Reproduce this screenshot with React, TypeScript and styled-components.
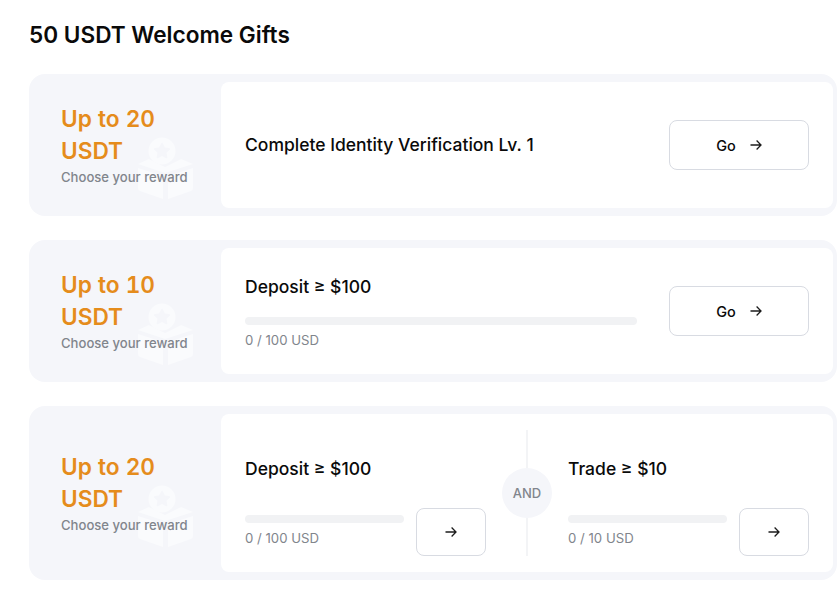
import {FC} from 'react'
import styled, {createGlobalStyle} from 'styled-components'

const GlobalStyle = createGlobalStyle`
    html, body {
        margin: 0;
        padding: 0;
        background: #fff;
        overflow: hidden;
    }
    body {
        font-family: "Inter", "Liberation Sans", sans-serif;
    }
`

const Page = styled.div`
    width: 837px;
    height: 591px;
    padding: 20px 0 0 29px;
    box-sizing: border-box;
    overflow: hidden;
`

const Title = styled.h2`
    margin: 0 0 25px;
    font-size: 22.6px;
    line-height: 29px;
    font-weight: 600;
    color: #0a0a0a;
`

const TaskList = styled.div`
    display: flex;
    flex-direction: column;
    gap: 24px;
`

const TaskCard = styled.div`
    display: flex;
    width: 808px;
    box-sizing: border-box;
    padding: 8px 4px 8px 0;
    background: #f5f6fa;
    border-radius: 16px;
`

const Reward = styled.div`
    position: relative;
    flex: 0 0 192px;
    display: flex;
    flex-direction: column;
    justify-content: center;
    padding-left: 32px;
    box-sizing: border-box;
`

const RewardAmount = styled.div`
    position: relative;
    width: 110px;
    font-size: 22.7px;
    line-height: 32px;
    font-weight: 600;
    font-variant-numeric: tabular-nums;
    color: #e58c1c;
`

const RewardHint = styled.div`
    position: relative;
    font-size: 13.1px;
    line-height: 20px;
    font-weight: 500;
    color: #81858c;
    white-space: nowrap;
`

const GiftMark = styled.svg`
    position: absolute;
    left: 108px;
    top: 50%;
    margin-top: -11px;
    width: 58px;
    height: 66px;
`

const TaskBody = styled.div`
    flex: 1;
    display: flex;
    align-items: center;
    justify-content: space-between;
    height: 126px;
    padding: 0 24px;
    background: #fff;
    border-radius: 8px;
`

const TaskSplit = styled(TaskBody)`
    align-items: stretch;
    padding: 16px 24px;
    height: 158px;
    box-sizing: border-box;
`

const TaskInfo = styled.div`
    display: flex;
    flex-direction: column;
    width: 392px;
    padding-top: 2px;
`

const TaskName = styled.div`
    font-size: 17.5px;
    line-height: 24px;
    font-weight: 500;
    color: #0a0a0a;
    white-space: nowrap;
`

const ProgressTrack = styled.div`
    height: 8px;
    margin-top: 18px;
    background: #f1f2f4;
    border-radius: 4px;
    overflow: hidden;
`

const ProgressLabel = styled.div`
    margin-top: 6px;
    font-size: 13.2px;
    line-height: 18px;
    color: #81858c;
`

const ActionButton = styled.button<{$wide?: boolean}>`
    flex: none;
    display: flex;
    align-items: center;
    justify-content: center;
    gap: 14px;
    width: ${(p) => (p.$wide ? '140px' : '70px')};
    height: ${(p) => (p.$wide ? '50px' : '48px')};
    padding: 0;
    background: #fff;
    border: 1px solid #d8dbe2;
    border-radius: 8px;
    font-family: inherit;
    font-size: 14.5px;
    font-weight: 500;
    color: #0a0a0a;
`

const SplitCell = styled.div`
    flex: 0 0 241px;
    display: flex;
    flex-direction: column;
    justify-content: space-between;
    padding-top: 27px;
    box-sizing: border-box;
`

const SplitBottom = styled.div`
    display: flex;
    align-items: flex-end;
    gap: 12px;
`

const SplitProgress = styled.div`
    flex: 1;
    margin-bottom: 9px;

    ${ProgressTrack} {
        margin-top: 0;
    }
`

const Divider = styled.div`
    position: relative;
    flex: 1;
    display: flex;
    justify-content: center;

    &::before {
        content: '';
        width: 2px;
        background: #f3f4f6;
    }
`

const AndBadge = styled.div`
    position: absolute;
    left: 50%;
    top: 38px;
    width: 50px;
    height: 50px;
    margin-left: -25px;
    display: flex;
    align-items: center;
    justify-content: center;
    background: #f5f6fa;
    border-radius: 50%;
    font-size: 13px;
    font-weight: 500;
    color: #81858c;
`

const Arrow: FC = () => (
    <svg width="12" height="12" viewBox="0 0 12 12" fill="none" stroke="#1c1c1c" strokeWidth="1.3">
        <path d="M0.5 6H11M6.6 1.5L11 6L6.6 10.5" />
    </svg>
)

const Gift: FC = () => (
    <GiftMark viewBox="0 0 58 66">
        <circle cx="25" cy="17" r="13.5" fill="#fafbfd" />
        <path
            d="M25 9.5l2.4 4.6 5 .8-3.6 3.6.8 5-4.6-2.3-4.6 2.3.8-5-3.6-3.6 5-.8z"
            fill="#f5f6fa"
            stroke="#f5f6fa"
            strokeWidth="1.5"
            strokeLinejoin="round"
        />
        <path d="M1 30l11-5 16 8 16-8 12 5-28 9z" fill="#fafbfd" />
        <path d="M1 34l25 8v23L3 57a3 3 0 0 1-2-3z" fill="#fafbfd" />
        <path d="M56 34l-25 8v23l23-8a3 3 0 0 0 2-3z" fill="#fafbfd" />
    </GiftMark>
)

const RewardPanel: FC<{amount: number}> = ({amount}) => (
    <Reward>
        <Gift />
        <RewardAmount>Up to {amount} USDT</RewardAmount>
        <RewardHint>Choose your reward</RewardHint>
    </Reward>
)

const SplitTask: FC<{name: string; progress: string}> = ({name, progress}) => (
    <SplitCell>
        <TaskName>{name}</TaskName>
        <SplitBottom>
            <SplitProgress>
                <ProgressTrack />
                <ProgressLabel>{progress}</ProgressLabel>
            </SplitProgress>
            <ActionButton>
                <Arrow />
            </ActionButton>
        </SplitBottom>
    </SplitCell>
)

const App: FC = () => (
    <Page>
        <GlobalStyle />
        <Title>50 USDT Welcome Gifts</Title>
        <TaskList>
            <TaskCard>
                <RewardPanel amount={20} />
                <TaskBody>
                    <TaskName>Complete Identity Verification Lv. 1</TaskName>
                    <ActionButton $wide>
                        Go <Arrow />
                    </ActionButton>
                </TaskBody>
            </TaskCard>
            <TaskCard>
                <RewardPanel amount={10} />
                <TaskBody>
                    <TaskInfo>
                        <TaskName>Deposit ≥ $100</TaskName>
                        <ProgressTrack />
                        <ProgressLabel>0 / 100 USD</ProgressLabel>
                    </TaskInfo>
                    <ActionButton $wide>
                        Go <Arrow />
                    </ActionButton>
                </TaskBody>
            </TaskCard>
            <TaskCard>
                <RewardPanel amount={20} />
                <TaskSplit>
                    <SplitTask name="Deposit ≥ $100" progress="0 / 100 USD" />
                    <Divider>
                        <AndBadge>AND</AndBadge>
                    </Divider>
                    <SplitTask name="Trade ≥ $10" progress="0 / 10 USD" />
                </TaskSplit>
            </TaskCard>
        </TaskList>
    </Page>
)

export default App
